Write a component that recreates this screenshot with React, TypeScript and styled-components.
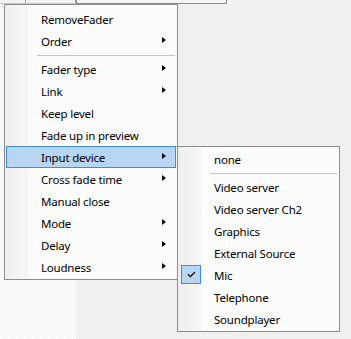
import React from "react";
import styled, { createGlobalStyle } from "styled-components";

const Global = createGlobalStyle`
  html, body { margin: 0; padding: 0; }
  body { width: 351px; height: 339px; overflow: hidden; background: #f0f0f0; }
`;

const Page = styled.div`
  position: relative;
  width: 351px;
  height: 339px;
  display: grid;
  grid-template-columns: 76px 1fr;
  grid-template-rows: 4px 1fr;
  background: #f0f0f0;
  font-family: "Noto Sans", "Segoe UI", sans-serif;
`;

const TopLeft = styled.div`
  display: flex;
  background: #f7f7f7;
`;

const TopCell = styled.div<{ $w: number }>`
  width: ${(p) => p.$w}px;
  height: 3px;
  border-right: 1px solid #a0a0a0;
  border-bottom: 1px solid #c8c8c8;
  background: #f2f2f2;
`;

const TopRight = styled.div`
  display: flex;
`;

const TopBox = styled.div`
  width: 149px;
  height: 3px;
  border: 1px solid #8a8a8a;
  border-top: none;
  background: #f4f4f4;
`;

const LeftPanel = styled.div`
  background-color: #fafafa;
  background-image: repeating-conic-gradient(#f6f6f6 0% 25%, #fcfcfc 0% 50%);
  background-size: 2px 2px;
`;

const RightPanel = styled.div`
  background: #f0f0f0;
`;

const Menu = styled.div<{ $left: number; $top: number; $width: number; $pt: number; $pb: number }>`
  position: absolute;
  left: ${(p) => p.$left}px;
  top: ${(p) => p.$top}px;
  width: ${(p) => p.$width}px;
  box-sizing: border-box;
  border: 1px solid #8c8c8c;
  padding: ${(p) => p.$pt}px 1px ${(p) => p.$pb}px 1px;
  background: linear-gradient(
    to right,
    #efefef 0px,
    #f6f6f6 23px,
    #fcfcfc 24px,
    #fcfcfc 100%
  );
  display: flex;
  flex-direction: column;
`;

const Item = styled.div<{ $hot?: boolean }>`
  position: relative;
  height: 22px;
  box-sizing: border-box;
  display: flex;
  align-items: center;
  padding-left: 34px;
  font-size: 11.5px;
  letter-spacing: -0.2px;
  color: #000;
  white-space: nowrap;
  border: 1px solid ${(p) => (p.$hot ? "#3a8fdc" : "transparent")};
  background: ${(p) => (p.$hot ? "#b8d6f3" : "transparent")};
`;

const Label = styled.span`
  line-height: 20px;
  transform: translateY(1px);
`;

const Arrow = styled.span`
  position: absolute;
  right: 9px;
  top: 6px;
  width: 0;
  height: 0;
  border-top: 3.5px solid transparent;
  border-bottom: 3.5px solid transparent;
  border-left: 4px solid #000;
`;

const Separator = styled.div`
  height: 6px;
  display: flex;
  align-items: center;
  padding-left: 31px;
  &::after {
    content: "";
    flex: 1;
    height: 1px;
    background: #c4c4c4;
    margin-right: 1px;
  }
`;

const CheckBox = styled.span`
  position: absolute;
  left: 1px;
  top: 0px;
  width: 20px;
  height: 19px;
  box-sizing: border-box;
  border: 1px solid #3a8fdc;
  background: #b8d6f3;
  display: flex;
  align-items: center;
  justify-content: center;
`;

type Entry = { label?: string; sub?: boolean; sep?: boolean; hot?: boolean; checked?: boolean };

const mainItems: Entry[] = [
  { label: "RemoveFader" },
  { label: "Order", sub: true },
  { sep: true },
  { label: "Fader type", sub: true },
  { label: "Link", sub: true },
  { label: "Keep level" },
  { label: "Fade up in preview" },
  { label: "Input device", sub: true, hot: true },
  { label: "Cross fade time", sub: true },
  { label: "Manual close" },
  { label: "Mode", sub: true },
  { label: "Delay", sub: true },
  { label: "Loudness", sub: true },
];

const subItems: Entry[] = [
  { label: "none" },
  { sep: true },
  { label: "Video server" },
  { label: "Video server Ch2" },
  { label: "Graphics" },
  { label: "External Source" },
  { label: "Mic", checked: true },
  { label: "Telephone" },
  { label: "Soundplayer" },
];

function renderItems(items: Entry[]) {
  return items.map((it, i) =>
    it.sep ? (
      <Separator key={i} />
    ) : (
      <Item key={i} $hot={it.hot}>
        {it.checked && (
          <CheckBox>
            <svg width="9" height="7" viewBox="0 0 9 7">
              <path d="M1 3.2 L3.4 5.6 L8 1" fill="none" stroke="#000" strokeWidth="1.3" />
            </svg>
          </CheckBox>
        )}
        <Label>{it.label}</Label>
        {it.sub && <Arrow />}
      </Item>
    )
  );
}

export default function App() {
  return (
    <>
      <Global />
      <Page>
        <TopLeft>
          <TopCell $w={25} />
          <TopCell $w={50} />
        </TopLeft>
        <TopRight>
          <TopBox />
        </TopRight>
        <LeftPanel />
        <RightPanel />
        <Menu $left={4} $top={4} $width={174} $pt={3} $pb={1}>
          {renderItems(mainItems)}
        </Menu>
        <Menu $left={177} $top={146} $width={163} $pt={1} $pb={1}>
          {renderItems(subItems)}
        </Menu>
      </Page>
    </>
  );
}
